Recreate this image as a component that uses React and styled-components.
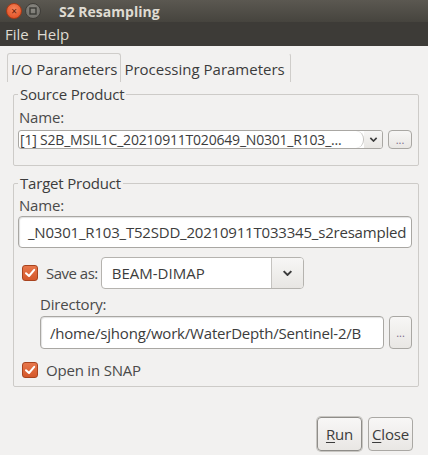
import React from "react";
import styled, { createGlobalStyle } from "styled-components";

const GlobalStyle = createGlobalStyle`
  html, body { margin: 0; padding: 0; background: #f2f1f0; }
  body { font-family: "Open Sans", "Noto Sans", sans-serif; color: #3c3c3c; }
`;

const Window = styled.div`
  width: 428px;
  height: 455px;
  display: flex;
  flex-direction: column;
  background: #f2f1f0;
  overflow: hidden;
`;

const TitleBar = styled.div`
  height: 22px;
  display: flex;
  align-items: center;
  padding-left: 6px;
  gap: 3px;
  background: linear-gradient(#5b5851, #46443e);
`;

const WinButton = styled.div`
  width: 16px;
  height: 16px;
  border-radius: 50%;
  box-sizing: border-box;
  display: flex;
  align-items: center;
  justify-content: center;
  background: ${(p) => (p.close ? "radial-gradient(circle at 50% 35%, #f4845a, #e0481c)" : "radial-gradient(circle at 50% 35%, #8c8a84, #6a6863)")};
  border: 1px solid ${(p) => (p.close ? "#a83a16" : "#3f3d39")};
  color: ${(p) => (p.close ? "#5a1a08" : "#3a3935")};
  font-size: 10px;
  line-height: 1;
`;

const Title = styled.span`
  margin-left: 15px;
  font-family: "Open Sans", sans-serif;
  font-weight: 700;
  font-size: 14px;
  color: #dfdbd2;
`;

const MenuBar = styled.div`
  height: 24px;
  display: flex;
  align-items: center;
  gap: 8px;
  padding-left: 5px;
  background: #3d3b37;
  font-size: 15px;
  color: #dfdbd2;
`;

const Body = styled.div`
  flex: 1;
  display: flex;
  flex-direction: column;
  padding: 7px 9px 4px 7px;
`;

const TabRow = styled.div`
  display: flex;
  height: 29px;
  align-items: stretch;
`;

const Tab = styled.div`
  display: flex;
  align-items: center;
  font-size: 15px;
  color: #3c3c3c;
  padding: 2px ${(p) => (p.active ? "3px" : "5px")} 0 ${(p) => (p.active ? "3px" : "2px")};
  border: 1px solid ${(p) => (p.active ? "#cfcdca" : "transparent")};
  border-bottom: none;
  border-right: 1px solid #cfcdca;
  border-radius: 3px 3px 0 0;
`;

const Group = styled.fieldset`
  margin: ${(p) => p.top}px 0 0 6px;
  padding: 0 6px ${(p) => p.pb}px 4px;
  border: 1px solid #cdcbc8;
  border-radius: 2px;
  min-width: 0;
`;

const Legend = styled.legend`
  font-size: 15px;
  color: #3c3c3c;
  padding: 0 2px;
  margin-left: 0;
  letter-spacing: -0.2px;
`;

const Label = styled.div`
  font-size: 15px;
  color: #4a4a4a;
  margin: ${(p) => p.m || "0"};
  letter-spacing: -0.2px;
`;

const Row = styled.div`
  display: flex;
  align-items: center;
  gap: ${(p) => p.gap || 6}px;
  margin: ${(p) => p.m || "0"};
`;

const Combo = styled.div`
  flex: 1;
  height: 19px;
  display: flex;
  box-sizing: border-box;
  border: 1px solid #a9a7a3;
  border-radius: 3px;
  background: #fff;
  overflow: hidden;
`;

const ComboText = styled.div`
  flex: 1;
  font-size: 14px;
  line-height: 17px;
  padding-left: 1px;
  white-space: nowrap;
  overflow: hidden;
  letter-spacing: -0.2px;
  border-right: 1px solid #c5c3c0;
  border-radius: 0 8px 8px 0;
`;

const ComboArrow = styled.div`
  width: ${(p) => p.w}px;
  display: flex;
  align-items: center;
  justify-content: center;
  background: linear-gradient(#f7f6f5, #e8e6e3);
  border-left: ${(p) => (p.sep ? "1px solid #c5c3c0" : "none")};
`;

const SmallButton = styled.div`
  width: ${(p) => p.w}px;
  height: ${(p) => p.h}px;
  box-sizing: border-box;
  border: 1px solid #a9a7a3;
  border-radius: 4px;
  background: linear-gradient(#f7f6f5, #e9e7e4);
  color: #7a6a8a;
  font-size: 11px;
  display: flex;
  align-items: center;
  justify-content: center;
`;

const Field = styled.div`
  flex: ${(p) => (p.grow ? 1 : "none")};
  height: ${(p) => p.h}px;
  box-sizing: border-box;
  border: 1px solid #a9a7a3;
  border-radius: 4px;
  background: #fff;
  box-shadow: inset 1px 1px 1px rgba(0, 0, 0, 0.12);
  font-size: 15px;
  color: #3c3c3c;
  display: flex;
  align-items: center;
  padding-left: 9px;
  white-space: nowrap;
  overflow: hidden;
  letter-spacing: -0.2px;
`;

const SaveCombo = styled.div`
  width: 203px;
  height: 32px;
  display: flex;
  box-sizing: border-box;
  border: 1px solid #b5b3af;
  border-radius: 4px;
  background: #fff;
  overflow: hidden;
`;

const SaveText = styled.div`
  flex: 1;
  display: flex;
  align-items: center;
  padding-left: 10px;
  font-size: 15px;
  color: #3c3c3c;
`;

const Check = styled.div`
  width: 16px;
  height: 16px;
  box-sizing: border-box;
  border-radius: 3px;
  border: 1px solid #a8431e;
  background: linear-gradient(#e7774b, #d4582b);
  display: flex;
  align-items: center;
  justify-content: center;
  margin-right: ${(p) => p.mr || 0}px;
`;

const CheckLabel = styled.span`
  font-size: 15px;
  color: #4a4a4a;
  letter-spacing: ${(p) => p.ls || -0.2}px;
`;

const Footer = styled.div`
  margin-top: auto;
  display: flex;
  justify-content: flex-end;
  gap: 6px;
  padding-right: 6px;
`;

const Button = styled.div`
  width: 45px;
  height: 34px;
  box-sizing: border-box;
  border: 1px solid ${(p) => (p.focus ? "#8f8d89" : "#aaa8a4")};
  box-shadow: ${(p) => (p.focus ? "0 0 0 1px #c8c6c2" : "none")};
  border-radius: 4px;
  background: linear-gradient(#f8f7f6, #e9e7e4);
  display: flex;
  align-items: center;
  justify-content: center;
  font-size: 15px;
  color: #3c3c3c;
  letter-spacing: -0.2px;
`;

const Mnemonic = styled.span`
  text-decoration: underline;
  text-underline-offset: 2px;
`;

const CheckMark = () => (
  <svg width="12" height="12" viewBox="0 0 12 12">
    <path d="M2 6.2 L5 9 L10.2 2.8" fill="none" stroke="#fff" strokeWidth="2" strokeLinecap="round" strokeLinejoin="round" />
  </svg>
);

const Chevron = ({ size }) => (
  <svg width={size} height={size * 0.6} viewBox="0 0 10 6">
    <path d="M1.5 1 L5 4.5 L8.5 1" fill="none" stroke="#3c3c3c" strokeWidth="1.8" />
  </svg>
);

export default function App() {
  return (
    <Window>
      <GlobalStyle />
      <TitleBar>
        <WinButton close>×</WinButton>
        <WinButton>
          <svg width="8" height="8" viewBox="0 0 8 8">
            <rect x="1" y="1" width="6" height="6" fill="none" stroke="#3a3935" strokeWidth="1.4" />
          </svg>
        </WinButton>
        <Title>S2 Resampling</Title>
      </TitleBar>
      <MenuBar>
        <span>File</span>
        <span>Help</span>
      </MenuBar>
      <Body>
        <TabRow>
          <Tab active>I/O Parameters</Tab>
          <Tab>Processing Parameters</Tab>
        </TabRow>
        <Group top={2} pb={16}>
          <Legend>Source Product</Legend>
          <Label m="3px 0 3px 1px">Name:</Label>
          <Row gap={5}>
            <Combo>
              <ComboText>[1] S2B_MSIL1C_20210911T020649_N0301_R103_...</ComboText>
              <ComboArrow w={18}>
                <Chevron size={9} />
              </ComboArrow>
            </Combo>
            <SmallButton w={24} h={19}>...</SmallButton>
          </Row>
        </Group>
        <Group top={7} pb={6}>
          <Legend>Target Product</Legend>
          <Label m="2px 0 1px 1px">Name:</Label>
          <Field grow h={32}>_N0301_R103_T52SDD_20210911T033345_s2resampled</Field>
          <Row gap={3} m="9px 0 0 4px">
            <Check mr={5}>
              <CheckMark />
            </Check>
            <CheckLabel ls={-0.5}>Save as:</CheckLabel>
            <SaveCombo>
              <SaveText>BEAM-DIMAP</SaveText>
              <ComboArrow w={31} sep>
                <Chevron size={11} />
              </ComboArrow>
            </SaveCombo>
          </Row>
          <Label m="5px 0 2px 22px">Directory:</Label>
          <Row gap={5} m="0 0 0 22px">
            <Field grow h={33}>/home/sjhong/work/WaterDepth/Sentinel-2/B</Field>
            <SmallButton w={23} h={33}>...</SmallButton>
          </Row>
          <Row gap={8} m="11px 0 0 4px">
            <Check>
              <CheckMark />
            </Check>
            <CheckLabel>Open in SNAP</CheckLabel>
          </Row>
        </Group>
        <Footer>
          <Button focus>
            <span><Mnemonic>R</Mnemonic>un</span>
          </Button>
          <Button>
            <span><Mnemonic>C</Mnemonic>lose</span>
          </Button>
        </Footer>
      </Body>
    </Window>
  );
}
